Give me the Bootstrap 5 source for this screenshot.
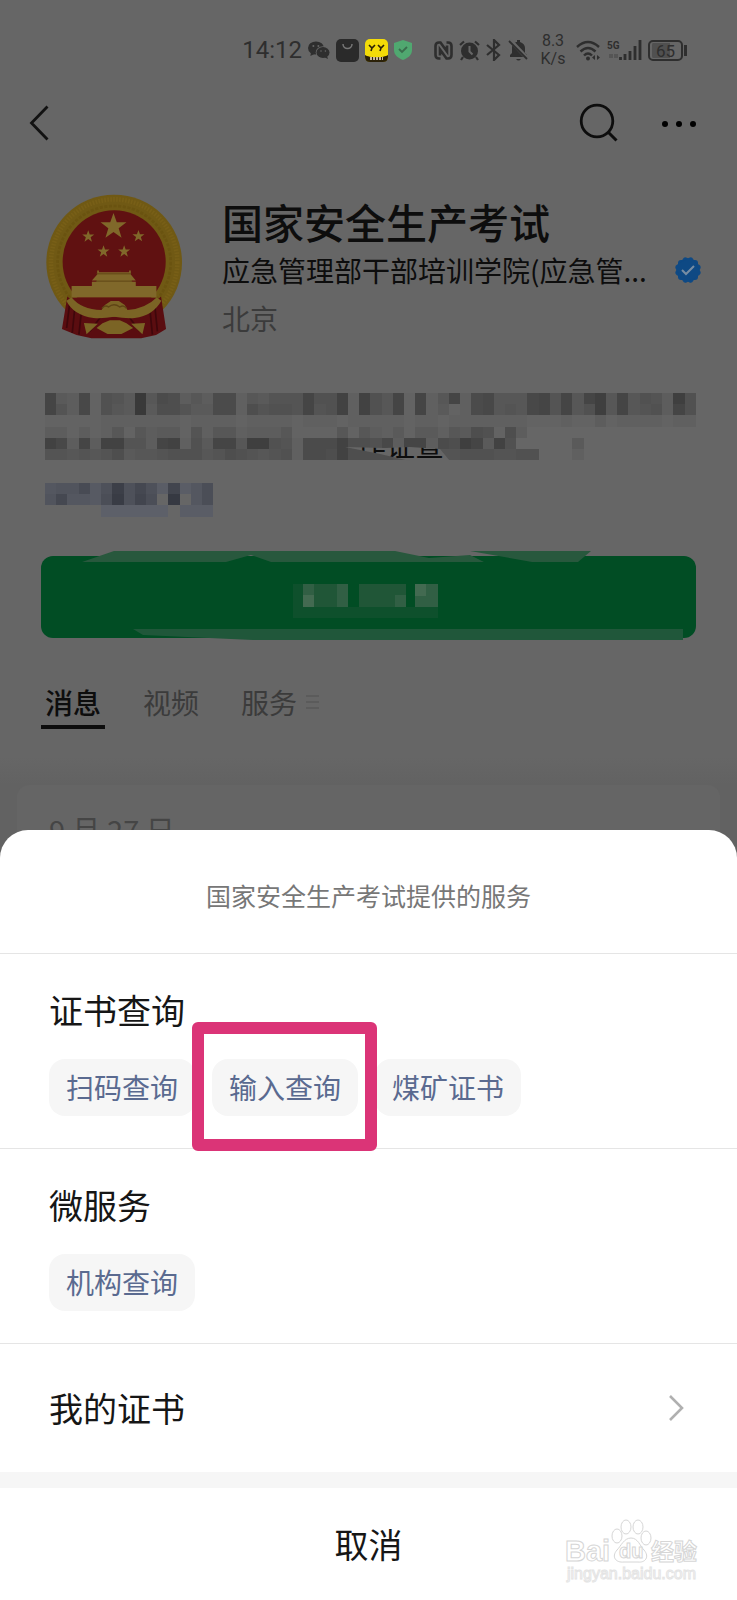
<!DOCTYPE html>
<html lang="zh-CN">
<head>
<meta charset="utf-8">
<meta name="viewport" content="width=device-width, initial-scale=1">
<title>国家安全生产考试</title>
<link href="https://cdn.jsdelivr.net/npm/bootstrap@5.3.0/dist/css/bootstrap.min.css" rel="stylesheet">
<style>
  body { background: #666; color: #0d0d0d; font-family: "Noto Sans CJK SC", sans-serif; overflow-x: hidden; }
  svg { display: block; flex: none; }
  .status { padding: 24px 50px 0 0; gap: 6px; height: 76px; color: #2e2e2e; font-family: Roboto, sans-serif; }
  .clock { font-size: 24px; line-height: 28px; }
  .speed { width: 28px; font-size: 16px; line-height: 18px; text-align: center; margin: 0 3px 0 4px; }
  .battery { border: 2px solid #2e2e2e; border-radius: 5px; width: 35px; height: 21px; font-size: 17px; line-height: 17px; text-align: center; position: relative; margin-right: 4px; background: linear-gradient(90deg, #505050 65%, transparent 65%); background-clip: content-box; padding: 1px 2px; }
  .battery::after { content: ""; position: absolute; right: -6px; top: 3px; width: 3px; height: 11px; background: #2e2e2e; }
  .topnav { height: 94px; padding: 0 38px 0 29px; gap: 42px; }
  .plain { border: 0; background: none; padding: 0; color: inherit; }
  .profile { padding: 23px 36px 0 46px; }
  .who { padding-top: 3px; margin-left: 39px; }
  .who h1 { font-size: 41px; line-height: 50px; font-weight: 500; margin: 0; }
  .org, .place { font-size: 28px; line-height: 48px; }
  .place { color: #3b3b3b; }
  .intro { padding: 51px 40px 0; }
  .follow-wrap { margin: 38px 41px 0; }
  .follow { height: 82px; border: 0; border-radius: 12px; background: #014d24; position: relative; }
  .follow svg { position: absolute; left: 0; top: -5px; width: 100%; height: 90px; }
  .tabs { margin: 44px 41px 28px; gap: 34px; font-size: 28px; line-height: 40px; }
  .tabs a { color: #3b3b3b; text-decoration: none; padding: 0 4px 3px; border-bottom: 4px solid transparent; }
  .tabs a.active { color: #0d0d0d; font-weight: 500; border-color: #0d0d0d; }
  .feed { background: linear-gradient(#666, #626262 28px); padding: 28px 17px 0; }
  .post { background: #656565; border-radius: 12px 12px 0 0; padding: 24px 32px 20px; font-size: 29px; line-height: 40px; color: #454545; }
  .sheet { position: relative; background: #fff; border-radius: 28px 28px 0 0; margin-top: -39px; color: #161616; }
  .sheet-title { font-size: 25px; line-height: 36px; padding: 47px 0 40px; color: #777; border-bottom: 1px solid #e5e5e5; font-weight: 400; margin: 0; }
  .group { padding: 32px 49px; border-bottom: 1px solid #e5e5e5; }
  .group h3, .entry, .cancel { font-size: 34px; line-height: 48px; font-weight: 400; }
  .group h3 { margin: 0 0 25px; }
  .chips { gap: 17px; }
  .chip { background: #f6f6f6; color: #5a6a90; border: 0; border-radius: 16px; font-size: 28px; line-height: 42px; padding: 7px 17px 8px; }
  .marked { position: relative; }
  .marked::after { content: ""; position: absolute; inset: -37px -19px -35px -20px; border: 12px solid #db3477; border-radius: 6px; z-index: 1; }
  .entry { color: #161616; text-decoration: none; padding: 40px 53px 40px 49px; }
  .band { height: 16px; background: #f6f6f6; }
  .cancel { color: #161616; padding: 32px 0; }
  .watermark { position: absolute; right: 38px; bottom: 12px; }
</style>
</head>
<body>
<div class="status d-flex align-items-center justify-content-end">
  <span class="clock">14:12</span>
  <svg width="22" height="18" viewBox="0 0 22 18"><g fill="#2e2e2e"><ellipse cx="8" cy="7" rx="8" ry="6.6"/><path d="M3 11l-.6 4 4-2z"/></g><ellipse cx="15" cy="11.500" rx="7.300" ry="6.200" fill="#666"/><ellipse cx="15" cy="11.500" rx="6.500" ry="5.400" fill="#2e2e2e"/><path d="M19 15l1 3-4-2z" fill="#2e2e2e"/><g fill="#666"><circle cx="5.400" cy="5" r="1"/><circle cx="10.400" cy="5" r="1"/><circle cx="13" cy="10" r=".8"/><circle cx="17.400" cy="10" r=".8"/></g></svg>
  <svg width="23" height="23" viewBox="0 0 23 23"><rect width="23" height="23" rx="5" fill="#2a2a2a"/><path d="M7 5c0 6 9 6 9 0" fill="none" stroke="#777" stroke-width="1.500"/></svg>
  <svg width="23" height="23" viewBox="0 0 23 23"><rect width="23" height="23" rx="5" fill="#f4dc08"/><path d="M0 16c4 3 19 3 23 0v2q0 5-5 5H5q-5 0-5-5z" fill="#2b2108"/><path d="M4 6l3 3 3-3M7 9l-1 3M13 6l3 3 3-3M16 9l-1 3" fill="none" stroke="#2b2108" stroke-width="1.600"/><path d="M5 19.500h13" stroke="#c9b9a0" stroke-width="3" stroke-dasharray="2 1"/></svg>
  <svg width="18" height="20" viewBox="0 0 18 20"><path d="M9 0l9 3v7c0 5-4 8-9 10-5-2-9-5-9-10V3z" fill="#50a870"/><path d="M5 9l3 3 5-5" fill="none" stroke="#3a6d4d" stroke-width="1.800"/></svg>
  <svg class="ms-3" width="19" height="19" viewBox="0 0 19 19"><path d="M6.500 17.500H5q-3.500 0-3.500-3.500V5q0-3.500 3.500-3.500h1.500l6.500 9V4.500M12.500 1.500H14q3.500 0 3.500 3.500v9q0 3.500-3.500 3.500h-1.500l-6.500-9v6" fill="none" stroke="#2e2e2e" stroke-width="2.600"/></svg>
  <svg width="21" height="21" viewBox="0 0 21 21"><circle cx="10.500" cy="11" r="8.500" fill="#2e2e2e"/><path d="M1 5l4-3.500M20 5l-4-3.500M4 17l-2 3M17 17l2 3" stroke="#2e2e2e" stroke-width="2.200"/><path d="M10.500 6v5.500l3 3" fill="none" stroke="#666" stroke-width="2"/></svg>
  <svg width="16" height="22" viewBox="0 0 16 22"><path d="M1 6l12 10-5 5V1l5 5L1 16" fill="none" stroke="#2e2e2e" stroke-width="2.200"/></svg>
  <svg width="21" height="22" viewBox="0 0 21 22"><path d="M2 18v-2l2-2V9c0-4 3-6 5-6V1h3v2c3 1 5 3 5 6v5l2 2v2zM8 20h5q-2.500 3-5 0z" fill="#2e2e2e"/><path d="M2 1l18 19" stroke="#666" stroke-width="4"/><path d="M1 2l18 18" stroke="#2e2e2e" stroke-width="1.800"/></svg>
  <span class="speed">8.3<br>K/s</span>
  <svg width="25" height="21" viewBox="0 0 25 21"><g fill="none" stroke="#2e2e2e" stroke-width="2.400"><path d="M1 7q11-10 22 0M4.500 11.500q7.500-7 15 0M8 15.500q4-4 8 0"/></g><circle cx="12" cy="18.500" r="2" fill="#2e2e2e"/><path d="M19 15v5l-3-2.500zM21 15v5l3-2.500z" fill="#2e2e2e"/></svg>
  <svg width="35" height="22" viewBox="0 0 35 22"><text x="0" y="10" font-family="Roboto" font-size="10" font-weight="700" fill="#2e2e2e">5G</text><path d="M2 17h9" stroke="#555" stroke-width="4" stroke-dasharray="4 1"/><path d="M13.500 21v-3M18 21v-6M23 21V12M28 21V7M33 21V1" stroke="#2e2e2e" stroke-width="2.800"/></svg>
  <span class="battery">65</span>
</div>

<nav class="topnav d-flex align-items-center" aria-label="顶部导航">
  <button class="plain me-auto" aria-label="返回"><svg width="20" height="36" viewBox="0 0 20 36"><path d="M18.500 1.500L2.500 18l16 16.500" fill="none" stroke="#121212" stroke-width="2.800"/></svg></button>
  <button class="plain" aria-label="搜索"><svg width="40" height="40" viewBox="0 0 40 40"><circle cx="18" cy="18" r="15.800" fill="none" stroke="#0d0d0d" stroke-width="2.800"/><path d="M29 29l8.500 8.500" stroke="#0d0d0d" stroke-width="3"/></svg></button>
  <button class="plain" aria-label="更多"><svg width="38" height="10" viewBox="0 0 38 10"><circle cx="4" cy="6" r="3"/><circle cx="18" cy="6" r="3"/><circle cx="32" cy="6" r="3"/></svg></button>
</nav>

<main>
  <section class="profile d-flex">
    <svg width="137" height="147" viewBox="78 40 412 440" role="img" aria-label="国徽">
      <defs><polygon id="star" points="0,-10 2.4,-3.2 9.5,-3.1 3.8,1.2 5.9,8.100 0,4 -5.900,8.100 -3.800,1.200 -9.500,-3.100 -2.400,-3.200"/></defs>
      <circle cx="283" cy="248" r="204" fill="#705914"/>
      <circle cx="283" cy="248" r="190" fill="none" stroke="#785f17" stroke-width="14" stroke-dasharray="5 4"/>
      <circle cx="283" cy="248" r="170" fill="none" stroke="#6a5310" stroke-width="8" stroke-dasharray="9 5"/>
      <circle cx="283" cy="246" r="155" fill="#601111"/>
      <g fill="#80682a"><use href="#star" transform="translate(281 140) scale(4.100)"/><use href="#star" transform="translate(205 170) scale(1.900)"/><use href="#star" transform="translate(356 169) scale(1.900)"/><use href="#star" transform="translate(251 215) scale(1.900)"/><use href="#star" transform="translate(313 215) scale(1.900)"/>
      <path d="M155 319h61v-13h14v-4h-14l16-18v-12h5v5h91v-5h5v12l15 18h-12v4h12v13h62v34H155z"/></g>
      <path d="M228 304h110M230 282h104" stroke="#5f4515" stroke-width="3"/>
      <path d="M155 354h255l-40 45H195z" fill="#601111"/>
      <path d="M142 350q68 60 141 62 73-2 141-62l15 98-30 18-45 10H215l-45-10-44-18z" fill="#5a0d10"/>
      <path d="M150 365l-10 80M165 380l-8 80M185 390l-8 75M405 375l8 80M390 385l8 80M240 415l-30 40M330 415l30 40" stroke="#3e070b" stroke-width="5"/>
      <path d="M155 353q28 35 90 38l10-15 18-12h24l18 12 8 15q55-5 88-38l14 10q-25 45-80 52-30 2-62-4-32 6-62 4-60-8-82-52z" fill="#7b6425"/>
      <path d="M192 430l42 2-34 32zM376 430l-42 2 34 32zM230 445l18-14 22-9h30l20 9 20 14-35 18h-42z" fill="#7b6425"/>
      <path d="M246 386q10-12 20-4 16-14 34 0 12-8 20 4" fill="none" stroke="#5f4515" stroke-width="4"/>
    </svg>
    <div class="who flex-grow-1">
      <h1>国家安全生产考试</h1>
      <div class="org d-flex align-items-center justify-content-between"><span class="text-nowrap">应急管理部干部培训学院(应急管...</span>
        <svg width="26" height="26" viewBox="-13 -13 26 26" role="img" aria-label="已认证"><g fill="#0e4984"><rect x="-10" y="-10" width="20" height="20" rx="3"/><rect x="-10" y="-10" width="20" height="20" rx="3" transform="rotate(30)"/><rect x="-10" y="-10" width="20" height="20" rx="3" transform="rotate(60)"/></g><path d="M-6 0l4 4 8-8" fill="none" stroke="#778da3" stroke-width="2"/></svg>
      </div>
      <div class="place">北京</div>
    </div>
  </section>

  <section class="intro">
    <svg id="mosaic" width="100%" viewBox="0 0 657 125" role="img" aria-label="已遮盖的简介" shape-rendering="crispEdges">
      <defs><clipPath id="gap"><path d="M305 54l40 1 25-1 30 2 10 12H370l-30-7z"/></clipPath></defs>
      <g id="blocks"></g>
      <g clip-path="url(#gap)"><rect x="300" y="50" width="120" height="20" fill="#666"/><text x="317" y="64" font-size="29" fill="#0d0d0d">作证查询</text></g>
    </svg>
  </section>

  <div class="follow-wrap">
    <button class="follow w-100 d-block" aria-label="关注公众号">
      <svg viewBox="0 0 655 90" preserveAspectRatio="none"><g fill="#28583d"><path d="M41 11L73 0h281l34 7 41-3 14 7H230l-20-7-25 7z"/><path d="M429 0h121l-13 11h-46z"/></g><path d="M92 78h550v11H212L102 84z" fill="#20573a"/>
      <g fill="#205637"><path d="M262 33h45v23h-45zM318 33h47v23h-47zM374 33h23v23h-23z"/><path d="M252 33h10v34h-10zM262 56h135v11H262z" fill="#0e502c"/><path d="M262 33h11v23h-11zM296 33h11v23h-11zM354 44h11v12h-11zM374 33h23v23h-23z" fill="#315f44"/></g><path d="M262 44h11v12h-11zM374 33h11v12h-11z" fill="#436a51"/></svg>
    </button>
  </div>

  <nav class="tabs d-flex" aria-label="内容">
    <a class="active" href="#news" aria-current="page">消息</a><a href="#video">视频</a><a href="#service" class="d-flex align-items-center">服务<svg class="ms-2" width="15" height="16" viewBox="0 0 15 16"><path d="M1 2h13M1 8h13M1 14h13" stroke="#585858" stroke-width="1.500"/></svg></a>
  </nav>
  <section class="feed" id="news"><div class="post">9 月 27 日</div></section>
</main>

<section class="sheet" role="dialog" aria-labelledby="sheetTitle">
  <h2 class="sheet-title text-center" id="sheetTitle">国家安全生产考试提供的服务</h2>
  <div class="group">
    <h3>证书查询</h3>
    <div class="chips d-flex flex-wrap"><button class="chip">扫码查询</button><button class="chip marked">输入查询</button><button class="chip">煤矿证书</button></div>
  </div>
  <div class="group">
    <h3>微服务</h3>
    <div class="chips d-flex flex-wrap"><button class="chip">机构查询</button></div>
  </div>
  <a class="entry d-flex justify-content-between align-items-center" href="#certificates">我的证书<svg width="16" height="26" viewBox="0 0 16 26"><path d="M2 1l12 12L2 25" fill="none" stroke="#b0b0b0" stroke-width="2.600"/></svg></a>
  <div class="band"></div>
  <button class="cancel plain w-100 text-center d-block">取消</button>
  <svg class="watermark" width="134" height="70" viewBox="0 0 134 70" role="img" aria-label="Baidu 经验">
    <g fill="#fff" stroke="#d6d6d6" stroke-width="1"><text x="0" y="43" font-size="29" font-weight="700" font-family="Liberation Sans, sans-serif">Bai</text>
    <ellipse cx="52" cy="18" rx="5" ry="7"/><ellipse cx="61" cy="9" rx="5" ry="7"/><ellipse cx="73" cy="9" rx="5" ry="7"/><ellipse cx="81" cy="20" rx="5" ry="7"/><path d="M66 20c7 0 9 8 13 12 6 7 1 13-6 12h-14c-8 1-13-5-7-12 4-4 7-12 14-12z"/>
    <text x="54" y="40" font-size="20" font-family="Liberation Sans" font-weight="700">du</text><text x="86" y="42" font-size="23" font-weight="700" font-family="Noto Sans CJK SC">经验</text>
    <text x="2" y="61" font-size="16" font-family="Liberation Sans" stroke="#e4e4e4">jingyan.baidu.com</text></g>
  </svg>
</section>

<script src="https://cdn.jsdelivr.net/npm/bootstrap@5.3.0/dist/js/bootstrap.bundle.min.js"></script>
<script>
  // Each character is one block: a hex grey level, or a dot for an empty cell.
  const grey = [
    '5cd6f9ac1b78dbd77ebcaaa5994e49b5f5eb5e76bbb65a5b53b5b9ad39',
    '5ad6f9bc1c88acc77e8a99a5a94e49b5f5ecfe76bab65a5b93b5ba9d59',
    'fffffeeeeeeefeeeefeeeefeeefeeeeefeefeeeeeeefffeffdfeeeefee',
    'ddfdfebfbdccfaebbedddbffffbfbdecfccebc89f8d...............',
    '46d5d44aad54e9c55b339ae77748896d55d7835c49.....c..........',
    'aababa8cbba999ba89aba9e778488889999aa999aa99...e..........'
  ];
  const blue = ['baa7c93969d5db8', 'a6bbc82958.1.b8', '.....eeeeee.ddd'];
  const g = document.getElementById('blocks'), s = 11.22;
  const draw = (rows, top, tint) => rows.forEach((row, y) => [...row].forEach((c, x) => {
    if (c === '.') return;
    const v = 54 + 3 * parseInt(c, 16), r = document.createElementNS('http://www.w3.org/2000/svg', 'rect');
    r.setAttribute('x', 5 + x * s); r.setAttribute('y', top + y * s);
    r.setAttribute('width', s); r.setAttribute('height', s);
    r.setAttribute('fill', tint ? `rgb(${v - 3},${v},${v + 9})` : `rgb(${v},${v},${v})`);
    g.append(r);
  }));
  draw(grey, 0, false);
  draw(blue, 90, true);
</script>
</body>
</html>
